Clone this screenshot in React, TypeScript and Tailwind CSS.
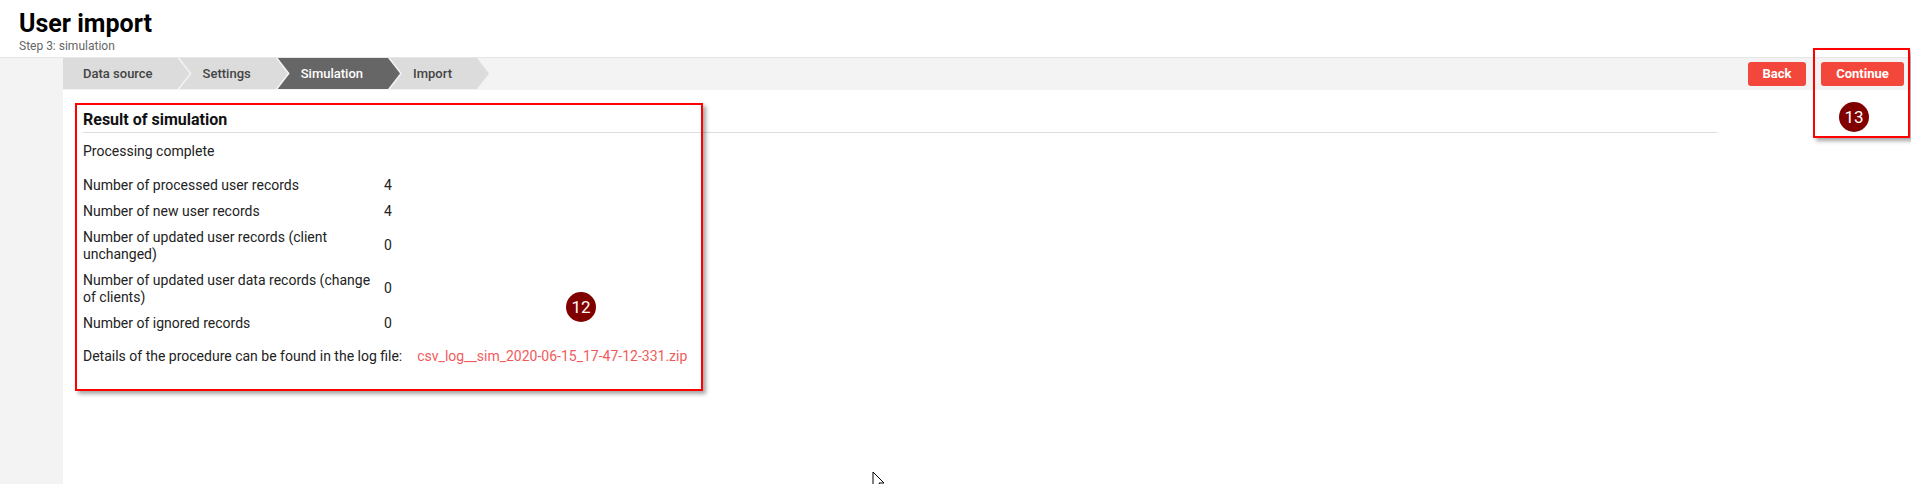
import React from "react";

const steps = [
  { label: "Data source", active: false },
  { label: "Settings", active: false },
  { label: "Simulation", active: true },
  { label: "Import", active: false },
];

const rows = [
  { label: "Number of processed user records", value: "4" },
  { label: "Number of new user records", value: "4" },
  { label: "Number of updated user records (client unchanged)", value: "0" },
  { label: "Number of updated user data records (change of clients)", value: "0" },
  { label: "Number of ignored records", value: "0" },
];

const firstClip = "polygon(0 0, calc(100% - 12px) 0, 100% 50%, calc(100% - 12px) 100%, 0 100%)";
const restClip =
  "polygon(0 0, calc(100% - 12px) 0, 100% 50%, calc(100% - 12px) 100%, 0 100%, 12px 50%)";

const Marker = ({ n }: { n: number }) => (
  <div className="w-[30px] h-[30px] rounded-full bg-[#800000] text-white text-[17px] leading-none flex items-center justify-center">
    {n}
  </div>
);

const App = () => {
  return (
    <div className="relative h-screen flex flex-col bg-white font-['Roboto',sans-serif] text-[#222] overflow-hidden">
      <header className="h-[57px] px-[19px] pt-[9px]">
        <h1 className="text-[25px] leading-[30px] font-bold text-black">User import</h1>
        <div className="text-[12px] leading-[14px] text-[#666]">Step 3: simulation</div>
      </header>

      <div className="flex flex-1 border-t border-[#e6e6e6]">
        <aside className="w-[63px] bg-[#f3f3f3]" />
        <main className="flex-1 flex flex-col">
          <div className="h-[32px] bg-[#f3f3f3] flex items-stretch justify-between">
            <nav className="flex items-stretch pb-[1px]">
              {steps.map((s, i) => (
                <div
                  key={s.label}
                  className={`flex items-center text-[13px] font-medium pr-[37px] ${
                    i === 0 ? "pl-[20px]" : "pl-[23px] -ml-[10px]"
                  } ${s.active ? "bg-[#666666] text-white" : "bg-[#dcdcdc] text-[#444]"}`}
                  style={{ clipPath: i === 0 ? firstClip : restClip }}
                >
                  {s.label}
                </div>
              ))}
            </nav>
            <div className="flex items-center gap-[15px] pr-[7px]">
              <button className="h-[24px] w-[58px] rounded-[3px] bg-[#f4473b] text-white text-[13px] font-bold">
                Back
              </button>
              <button className="h-[24px] w-[83px] rounded-[3px] bg-[#f4473b] text-white text-[13px] font-bold">
                Continue
              </button>
            </div>
          </div>

          <section className="pl-[20px] pr-[194px] pt-[19px] text-[14px]">
            <h2 className="text-[16px] leading-[21px] font-bold text-[#111] pb-[2px] border-b border-[#dddddd]">
              Result of simulation
            </h2>
            <p className="mt-[9px] leading-[18px]">Processing complete</p>
            <div className="mt-[12px]">
              {rows.map((r) => (
                <div key={r.label} className="flex items-center py-[4.5px] leading-[17px]">
                  <div className="w-[301px] pr-[12px]">{r.label}</div>
                  <div>{r.value}</div>
                </div>
              ))}
            </div>
            <div className="mt-[11px] flex leading-[18px]">
              <span>Details of the procedure can be found in the log file:</span>
              <a href="#" className="ml-[15px] text-[#f25a5a]">
                csv_log__sim_2020-06-15_17-47-12-331.zip
              </a>
            </div>
          </section>
        </main>
      </div>

      {/* annotation overlays */}
      <div className="absolute left-[75px] top-[103px] w-[628px] h-[288px] border-2 border-[#ff0000] shadow-[3px_3px_4px_rgba(0,0,0,0.35)]" />
      <div className="absolute left-[1813px] top-[48px] w-[97px] h-[90px] border-2 border-[#ff0000] shadow-[3px_3px_4px_rgba(0,0,0,0.35)]" />
      <div className="absolute left-[566px] top-[292px]">
        <Marker n={12} />
      </div>
      <div className="absolute left-[1839px] top-[102px]">
        <Marker n={13} />
      </div>
      <svg className="absolute left-[872px] top-[471px]" width="14" height="20" viewBox="0 0 14 20">
        <path d="M1 1 L1 17 L5 13 L8 19 L10 18 L7 12 L12 12 Z" fill="white" stroke="black" strokeWidth="1" />
      </svg>
    </div>
  );
};

export default App;
